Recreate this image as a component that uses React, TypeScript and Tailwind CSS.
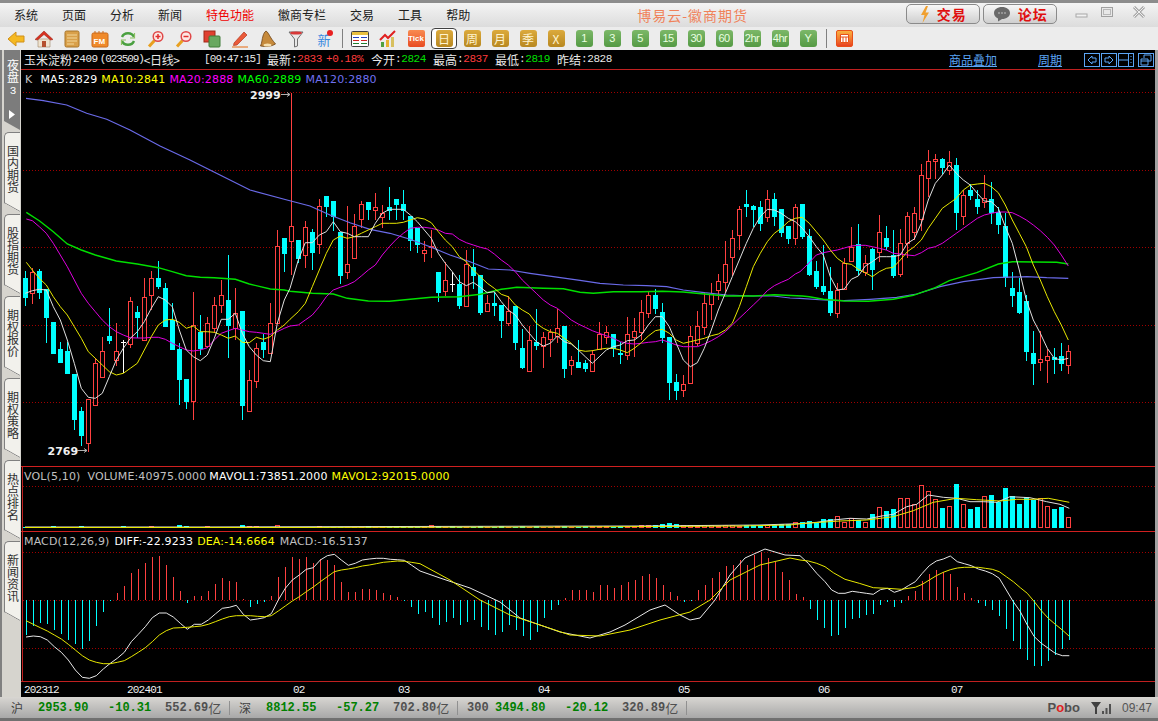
import type { ReactNode } from "react";

type Point = [number, number];
type Candle = [string, number, number, number, number];

const UP = "#ff4040";
const DOWN = "#00ffff";

// candle readings: kind, wick top, body top, body bottom, wick bottom (3x crop units)
const seg1: Candle[] = [
  ["c", 213, 234, 294, 318], ["r", 205, 215, 277, 312], ["c", 207, 213, 279, 297], ["c", 268, 268, 354, 430],
  ["c", 366, 366, 462, 462], ["c", 426, 447, 489, 489], ["c", 426, 453, 522, 522], ["c", 522, 522, 660, 690],
  ["c", 621, 633, 708, 738], ["r", 597, 597, 728, 755], ["r", 475, 490, 617, 617], ["r", 412, 454, 533, 535],
  ["c", 324, 408, 424, 432], ["r", 370, 454, 480, 500], ["w", 420, 426, 426, 518], ["r", 292, 304, 432, 445],
  ["c", 318, 336, 354, 415], ["r", 235, 292, 422, 423], ["r", 213, 235, 287, 330], ["c", 183, 235, 261, 267],
  ["c", 250, 264, 382, 382], ["c", 310, 360, 450, 450], ["c", 430, 447, 540, 615], ["c", 537, 537, 606, 627],
  ["r", 276, 376, 605, 660], ["c", 345, 396, 447, 465], ["r", 351, 370, 440, 445], ["r", 292, 316, 386, 400],
  ["r", 240, 286, 316, 340], ["c", 165, 300, 378, 474], ["r", 264, 340, 386, 420], ["c", 333, 333, 618, 660],
  ["r", 510, 541, 635, 636], ["r", 430, 444, 542, 565], ["c", 402, 426, 450, 474], ["r", 309, 370, 460, 462],
  ["r", 90, 139, 371, 372], ["c", 114, 114, 162, 216], ["r", -321, 79, 124, 225], ["c", 120, 120, 178, 190],
  ["r", 63, 82, 166, 204],
];
const seg2: Candle[] = [
  ["c", 178, 186, 249, 300], ["r", 87, 109, 224, 252], ["c", 78, 78, 111, 141], ["c", 93, 93, 141, 183],
  ["c", 186, 186, 318, 342], ["r", 108, 282, 305, 327], ["r", 132, 168, 264, 264], ["r", 93, 102, 147, 175],
  ["c", 96, 96, 120, 150], ["r", 69, 111, 119, 150], ["r", 105, 129, 140, 174], ["c", 51, 111, 123, 150],
  ["c", 87, 87, 105, 150], ["c", 60, 102, 123, 150], ["c", 138, 138, 213, 243], ["c", 174, 174, 225, 249],
  ["r", 213, 240, 250, 276], ["r", 180, 229, 233, 264], ["c", 306, 306, 369, 396], ["r", 276, 331, 365, 378],
  ["w", 306, 342, 342, 366], ["c", 315, 342, 408, 417], ["r", 240, 282, 408, 408], ["c", 237, 291, 318, 357],
  ["c", 315, 315, 429, 435], ["r", 375, 400, 425, 426], ["c", 366, 399, 408, 438], ["c", 405, 405, 453, 504],
  ["r", 378, 424, 461, 468], ["c", 408, 408, 519, 540], ["c", 477, 534, 594, 597], ["r", 468, 511, 605, 606],
  ["c", 417, 516, 528, 540], ["r", 486, 502, 528, 594], ["r", 477, 487, 509, 561], ["r", 417, 475, 498, 519],
  ["c", 468, 468, 597, 624], ["r", 558, 571, 587, 615], ["c", 510, 576, 594, 594],
  ["c", 570, 579, 597, 606], ["r", 540, 552, 602, 602], ["r", 456, 492, 537, 540], ["r", 468, 487, 501, 522],
  ["c", 492, 492, 537, 560], ["c", 515, 549, 555, 582], ["r", 441, 492, 554, 570], ["r", 444, 483, 502, 561],
  ["r", 390, 427, 486, 510], ["r", 363, 376, 429, 444], ["c", 357, 376, 417, 432], ["c", 399, 426, 504, 519],
  ["c", 501, 501, 639, 690], ["c", 612, 636, 663, 690], ["r", 615, 643, 662, 681], ["r", 468, 498, 638, 639],
  ["r", 423, 468, 519, 528], ["r", 366, 399, 471, 495], ["r", 339, 372, 402, 450], ["r", 312, 333, 360, 390],
  ["r", 213, 282, 335, 366], ["r", 180, 205, 263, 318], ["r", 108, 118, 197, 240], ["c", 60, 102, 111, 141],
  ["c", 105, 108, 120, 171], ["c", 93, 111, 162, 183], ["r", 60, 88, 141, 156], ["c", 69, 87, 141, 168],
  ["c", 117, 117, 189, 201], ["c", 168, 168, 207, 222], ["r", 102, 112, 205, 225], ["c", 102, 102, 201, 207],
  ["c", 177, 198, 315, 318], ["c", 273, 303, 351, 357], ["c", 225, 348, 366, 375], ["c", 291, 363, 429, 438],
  ["r", 340, 360, 429, 444], ["r", 264, 279, 357, 360], ["r", 171, 231, 272, 273], ["c", 162, 222, 304, 315],
  ["r", 255, 280, 306, 318],
];
const seg3: Candle[] = [
  ["c", 325, 327, 390, 450], ["r", 225, 277, 338, 365], ["c", 258, 294, 321, 330], ["c", 270, 346, 408, 415],
  ["r", 267, 310, 404, 410], ["r", 215, 229, 310, 352], ["r", 200, 220, 278, 300], ["r", 72, 106, 238, 272],
  ["r", 30, 64, 115, 171], ["r", 42, 58, 64, 117], ["c", 54, 58, 84, 102], ["r", 33, 67, 91, 105],
  ["c", 54, 75, 218, 270], ["r", 150, 166, 230, 255], ["c", 132, 150, 167, 180], ["c", 150, 177, 201, 222],
  ["r", 105, 175, 187, 204], ["c", 126, 177, 219, 252], ["c", 201, 216, 255, 282], ["c", 220, 258, 414, 441],
  ["c", 396, 444, 468, 501], ["c", 414, 456, 519, 522], ["c", 465, 483, 636, 663], ["c", 573, 639, 672, 735],
  ["r", 573, 658, 667, 693], ["r", 627, 649, 661, 729], ["c", 624, 652, 660, 702], ["c", 609, 648, 672, 693],
  ["r", 615, 634, 676, 702],
];

const toY = (seg: Candle[], oy: number): Candle[] =>
  seg.map(([k, a, b, c, d]) => [k, oy + a / 3, oy + b / 3, oy + c / 3, oy + d / 3]);

const candles: Candle[] = [...toY(seg1, 200), ...toY(seg2, 170), ...toY(seg3, 140)];
const cx = (i: number) => 25 + i * 7;

const scale = (ox: number, oy: number, list: number[]): Point[] => {
  const out: Point[] = [];
  for (let i = 0; i < list.length; i += 2) out.push([ox + list[i] / 3, oy + list[i + 1] / 3]);
  return out;
};

const merge = (...segs: Point[][]) => {
  const out: Point[] = [];
  segs.forEach((s) =>
    s.forEach((p) => {
      if (!out.length || p[0] > out[out.length - 1][0] + 1.5) out.push(p);
    })
  );
  return out.map((p) => `${p[0].toFixed(1)},${p[1].toFixed(1)}`).join(" ");
};

const ma5 = merge(
  scale(20, 200, [16,280,37,272,58,268,79,270,100,320,121,360,142,420,163,490,184,565,205,592,226,595,247,580,268,530,289,480,310,445,331,415,352,395,373,365,394,325,415,290,436,300,457,320,478,390,499,450,520,470,541,482,562,465,583,415,604,358,625,358,646,340,667,400,688,440,709,465,730,482,751,485,772,370,793,300]),
  scale(290, 170, [0,355,25,270,46,218,67,218,88,195,109,185,130,155,151,185,172,190,193,200,214,200,235,200,256,160,277,130,298,118,319,118,340,118,361,135,382,155,403,180,424,205,445,250,466,280,487,305,508,335,529,347,550,337,571,352,592,368,613,365,634,395,655,420,676,435,697,465,718,490,739,515,760,528,781,520,802,498,823,515,844,522,865,540]),
  scale(580, 170, [16,560,37,580,58,560,79,540,100,530,121,525,142,512,163,510,184,495,205,465,226,440,247,440,268,470,289,520,310,570,331,590,352,578,373,535,394,480,415,420,436,370,457,320,478,270,499,220,520,175,541,140,562,118,583,120,604,130,625,145,646,155,667,175]),
  scale(800, 140, [7,250,28,290,49,320,70,345,91,410,112,450,133,447,154,418,175,408,196,378,217,365,238,350,259,350,280,350,301,345,322,310,343,297,364,250,385,180,406,130,427,105,448,75,469,100,490,120,511,135,532,160,553,183,574,185,595,205,616,260,637,310,658,390,679,480,700,540,721,580,742,625,763,655,784,660,805,655])
);
const ma10 = merge(
  scale(20, 200, [19,187,37,210,58,235,79,255,100,290,121,320,142,345,163,380,184,415,205,455,226,475,247,495,268,515,289,525,310,520,331,505,352,490,373,450,394,410,415,375,436,360,457,358,478,367,499,385,520,378,541,395,562,395,583,397,604,405,625,415,646,408,667,427,688,428,709,412,730,418,751,410,772,390,793,375]),
  scale(290, 170, [0,448,25,425,46,400,67,350,88,300,109,250,130,210,151,198,172,205,193,200,214,190,235,180,256,170,277,160,298,160,319,160,340,157,361,150,382,143,403,147,424,158,445,185,466,210,487,230,508,260,529,275,550,300,571,320,592,340,613,355,634,373,655,380,676,405,697,420,718,432,739,460,760,475,781,485,802,490,823,505,844,520,865,540]),
  scale(580, 170, [16,544,37,542,58,538,79,535,100,535,121,540,142,548,163,535,184,518,205,498,226,482,247,478,268,490,289,510,310,520,331,515,352,510,373,505,394,497,415,492,436,480,457,460,478,410,499,350,520,290,541,250,562,215,583,190,604,175,625,155,646,145,667,142]),
  scale(800, 140, [7,232,28,250,49,275,70,300,91,330,112,355,133,370,154,373,175,388,196,398,217,410,238,395,259,385,280,382,301,360,322,335,343,320,364,300,385,265,406,235,427,205,448,190,469,175,490,150,511,135,532,132,553,130,574,140,595,158,616,195,637,240,658,280,679,320,700,375,721,420,742,470,763,515,784,555,805,600])
);
const ma20 = merge(
  scale(20, 200, [19,57,37,62,58,80,79,100,100,130,121,165,142,200,163,240,184,280,205,310,226,335,247,360,268,380,289,395,310,405,331,413,352,414,373,414,394,412,415,412,436,418,457,430,478,440,499,450,520,453,541,450,562,443,583,420,604,400,625,392,646,385,667,390,688,395,709,397,730,400,751,403,772,395,793,385]),
  scale(290, 170, [0,468,25,465,46,450,67,435,88,410,109,380,130,360,151,352,172,345,193,335,214,318,235,300,256,285,277,255,298,230,319,208,340,190,361,175,382,172,403,172,424,175,445,180,466,190,487,192,508,208,529,218,550,225,571,232,592,237,613,252,634,270,655,285,676,305,697,330,718,350,739,370,760,390,781,405,802,415,823,432,844,450,865,462]),
  scale(580, 170, [16,472,37,482,58,490,79,497,100,505,121,515,142,520,163,522,184,520,205,517,226,515,247,510,268,517,289,525,310,530,331,530,352,530,373,522,394,512,415,500,436,485,457,465,478,445,499,425,520,405,541,385,562,362,583,347,604,337,625,328,646,312]),
  scale(800, 140, [0,395,21,375,49,345,70,338,91,334,112,330,133,324,154,318,175,316,196,316,217,320,238,325,259,330,280,340,301,342,322,345,343,347,364,338,385,325,406,320,427,310,448,295,469,280,490,265,511,250,532,235,553,225,574,220,595,216,616,216,637,218,658,228,679,240,700,255,721,272,742,292,763,315,784,345,805,378])
);
const ma60 = merge(
  scale(20, 200, [19,37,58,62,100,95,142,132,184,150,226,165,289,183,352,192,415,203,457,215,499,227,541,232,583,233,646,238,688,252,751,267,793,270]),
  scale(290, 170, [0,364,67,370,130,372,172,385,235,393,298,394,361,388,424,382,508,380,571,373,634,358,680,352,760,355,820,356,870,367]),
  scale(580, 170, [40,370,100,365,184,365,247,364,310,366,373,372,436,378,520,378,583,374,667,378]),
  scale(800, 140, [0,466,28,470,70,478,133,483,205,484,280,478,340,466,406,443,448,422,530,398,595,372,637,365,700,366,770,367,805,372])
);
const ma120 = merge(
  scale(0, 50, [78,145,130,152,200,165,260,190,320,208,390,240,480,288,570,330,660,375,750,420,861,450]),
  scale(290, 170, [60,108,120,135,180,158,240,178,300,190,360,208,420,230,480,255,540,275,595,297,660,300,720,310,790,320,870,331]),
  scale(580, 170, [60,340,130,345,200,347,260,350,310,360,373,368,440,375,520,378,580,378,630,384]),
  scale(800, 140, [0,475,70,480,133,482,210,478,290,472,350,462,420,440,490,425,580,413,680,410,740,413,805,415])
);

// volume bars, height in px
const volSmall = [
  1,1,1,1,2,1,1,1,2,1,1,1,1,1,2,1,1,1,2,1,1,1,3,2,1,1,2,1,1,1,1,3,2,2,1,1,3,1,1,1,
  1,1,2,1,1,1,1,1,1,2,1,1,1,2,1,2,1,1,3,2,1,2,1,1,1,2,1,1,2,1,1,2,1,2,1,1,2,2,1,1,
  2,2,2,2,1,2,2,2,3,3,3,4,5,4,3,3,2,3,3,2,3,3,2,3,3,3,3,3,4,4,6,
];
const volTops = [172,168,175,162,162,154,170,160,166,172,147,127,138,132,100,100,118,61,79,103,129,124,57,118,132,126,94,90,112,69,94,117,97,106,100,124,132,126,157];
const volBars = [...volSmall.slice(0, 111).map((h) => 528 - h), ...volTops.map((v) => 465 + v / 3)];

const vol1 = merge(
  [[25,527],[200,527],[400,526.5],[640,526],[700,525.5],[760,525]],
  scale(800, 465, [0,176,50,172,100,165,150,160,200,162,250,152,280,148,320,125,350,118,385,90,430,97,470,100,510,110,550,110,590,112,630,95,690,98,740,110,780,118,808,130])
);
const vol2 = merge(
  [[25,527.5],[300,527.5],[560,527],[660,526.5],[740,526],[790,525]],
  scale(800, 465, [0,176,60,172,120,168,200,165,280,155,340,137,400,112,470,100,530,104,600,108,650,103,700,103,745,100,808,112])
);

// MACD bars: y of the free end of every bar
const m1 = [510,483,474,477,495,507,525,537,551,528,483,441,404,384,363,324,312,294,276,273,300,336,378,414,393,393,378,357,339,348,351,403,426,417,411,393,336,306,276,282,276,294,282,285,300,351,381,381,372,372,375,384,390,396,404,426,447];
const m2 = [612,618,625,622,618,625,622,620,627,630,635,632,625,630,636,640,632,618,610,605,598,590,590,590,592,585,585,588,585,582,580,576,574,578,585,592,596,602,600,590,585,578,572,566,565,560,565,555,552,558,562,572,580,594,597];
const m3 = [432,465,489,513,510,489,462,459,450,447,420,411,426,414,393,378,348,327,315,321,327,366,384,399,414,423,435,453,492,528,552,585,603,603,588,570,552,525];
const macdBars = [...m1.map((v) => 465 + v / 3), ...m2, ...m3.map((v) => 465 + v / 3)];

const diff = merge(
  scale(20, 465, [18,516,40,513,61,515,82,525,103,545,124,562,145,585,166,615,187,637,208,640,229,632,250,612,271,595,292,580,313,562,334,530,355,508,376,485,397,458,418,444,439,444,460,456,481,475,502,493,523,478,544,478,565,465,586,447,607,430,628,427,649,421,670,448,691,465,712,462,733,458,754,446,775,405,796,370,817,345,838,330,859,313,880,308,901,285,922,272,943,268,964,285,985,301,1006,295,1027,285,1048,282,1069,280,1090,280,1111,283,1132,284,1153,286,1174,300,1200,318]),
  [[440,578],[470,588],[500,602],[520,618],[540,625],[560,632],[590,638],[610,632],[625,625],[650,610],[665,605],[680,615],[690,620],[700,618],[715,600],[730,575],[745,558],[765,549],[785,555]],
  scale(800, 465, [0,272,25,295,50,325,75,350,95,375,115,385,135,385,157,379,178,382,199,385,220,388,241,374,262,370,283,382,304,375,325,362,346,350,367,325,388,302,409,288,430,282,451,273,472,290,493,296,514,302,535,312,556,318,577,326,598,340,619,375,640,410,661,440,682,480,703,515,724,535,745,550,766,565,787,572,808,572])
);
const dea = merge(
  scale(20, 465, [18,467,40,478,61,488,82,498,103,510,124,522,145,538,166,555,187,572,208,585,229,592,250,596,271,596,292,592,313,587,334,575,355,562,376,548,397,530,418,510,439,497,460,489,481,488,502,487,523,485,544,483,565,478,586,470,607,462,628,455,649,452,670,452,691,452,712,454,733,455,754,452,775,438,796,423,817,408,838,395,859,380,880,366,901,350,922,335,943,320,964,315,985,312,1006,308,1027,303,1048,300,1069,296,1090,292,1111,290,1132,288,1153,289,1174,292,1200,296]),
  [[450,580],[480,600],[510,615],[540,625],[570,635],[600,636],[630,630],[660,620],[690,612],[710,600],[730,580],[760,565],[790,558]],
  scale(800, 465, [0,285,25,288,50,295,75,305,100,323,135,343,178,355,220,368,262,370,304,373,346,367,367,358,388,345,409,332,430,322,451,314,472,309,493,307,535,307,556,310,577,313,598,320,619,335,640,350,661,368,682,385,703,410,724,437,745,460,766,478,787,495,808,514])
);

const Dots = ({ y, from = 23 }: { y: number; from?: number }) => (
  <line x1={from} x2={1155} y1={y + 0.5} y2={y + 0.5} stroke="#a00000" strokeDasharray="1 2" shapeRendering="crispEdges" />
);

const Line = ({ points, color, width = 1 }: { points: string; color: string; width?: number }) => (
  <polyline points={points} fill="none" stroke={color} strokeWidth={width} />
);

const MainChart = () => (
  <svg viewBox="21 70 1134 396" className="block h-full w-full">
    {[92, 170, 247, 325, 402].map((y) => (
      <Dots key={y} y={y} />
    ))}
    <g shapeRendering="crispEdges">
      {candles.map(([k, wt, bt, bb, wb], i) => {
        const x = cx(i);
        const color = k === "r" ? UP : k === "c" ? DOWN : "#ffffff";
        return (
          <g key={i}>
            <rect x={x} y={Math.round(wt)} width={1} height={Math.max(1, Math.round(wb - wt))} fill={color} />
            {k === "c" && <rect x={x - 2} y={Math.round(bt)} width={5} height={Math.max(1, Math.round(bb - bt))} fill={color} />}
            {k === "r" && <rect x={x - 1.5} y={Math.round(bt) + 0.5} width={4} height={Math.max(1, Math.round(bb - bt))} fill="#000" stroke={color} />}
            {k === "w" && <rect x={x - 2} y={Math.round(bt)} width={5} height={1} fill={color} />}
          </g>
        );
      })}
    </g>
    <Line points={ma120} color="#6a6ae8" width={1.2} />
    <Line points={ma60} color="#00e000" width={1.4} />
    <Line points={ma20} color="#e000e0" />
    <Line points={ma10} color="#e8e800" />
    <Line points={ma5} color="#e0e0e0" />
    <text x={250} y={98.5} fill="#f0f0f0" fontSize={11} fontWeight={700} fontFamily="'DejaVu Sans', sans-serif">2999</text>
    <path d="M281 94.5H290M287 92.5L290 94.5L287 96.5" fill="none" stroke="#b0b0b0" />
    <text x={47.5} y={454.5} fill="#f0f0f0" fontSize={11} fontWeight={700} fontFamily="'DejaVu Sans', sans-serif">2769</text>
    <path d="M77 450.5H87M84 448.5L87 450.5L84 452.5" fill="none" stroke="#b0b0b0" />
  </svg>
);

const VolChart = () => (
  <svg viewBox="23 467 1132 64" className="block h-full w-full">
    <Dots y={486} />
    <g shapeRendering="crispEdges">
      {volBars.map((top, i) => {
        const x = cx(i);
        const k = candles[i][0];
        const h = Math.max(1, Math.round(528 - top));
        if (k === "r")
          return h < 3 ? (
            <rect key={i} x={x - 2} y={528 - h} width={5} height={h} fill={UP} />
          ) : (
            <rect key={i} x={x - 1.5} y={528 - h + 0.5} width={4} height={h - 1} fill="#000" stroke={UP} />
          );
        return <rect key={i} x={x - 2} y={528 - h} width={5} height={h} fill={DOWN} />;
      })}
    </g>
    <Line points={vol1} color="#e0e0e0" />
    <Line points={vol2} color="#e8e800" />
  </svg>
);

const MacdChart = () => (
  <svg viewBox="23 532 1132 149" className="block h-full w-full">
    {[552, 600, 648].map((y) => (
      <Dots key={y} y={y} />
    ))}
    <g shapeRendering="crispEdges">
      {macdBars.map((end, i) => {
        const x = cx(i) + 1;
        const e = Math.round(end);
        return e < 600 ? (
          <rect key={i} x={x} y={e} width={1} height={600 - e} fill={UP} />
        ) : (
          <rect key={i} x={x} y={600} width={1} height={Math.max(1, e - 600)} fill={DOWN} />
        );
      })}
    </g>
    <Line points={diff} color="#e8e8e8" />
    <Line points={dea} color="#e8e800" />
  </svg>
);

const axisLabels: [string, number][] = [["202312", 24], ["202401", 127], ["02", 293], ["03", 398], ["04", 538], ["05", 678], ["06", 818], ["07", 951]];

const AxisRow = () => (
  <svg viewBox="21 682 1134 15" className="block h-[15px] w-full">
    {axisLabels.map(([t, x]) => (
      <text key={t} x={x} y={693} fill="#f0f0f0" fontSize={11} letterSpacing={-0.8} fontFamily="'Liberation Mono', monospace">{t}</text>
    ))}
  </svg>
);

const Mono = ({ children, className = "" }: { children: ReactNode; className?: string }) => (
  <span className={`font-['Liberation_Mono',monospace] text-[11px] tracking-[-0.4px] ${className}`}>{children}</span>
);

const Quote = ({ label, value, color, w }: { label: string; value: string; color: string; w: string }) => (
  <span className={`flex shrink-0 items-center whitespace-nowrap ${w}`}>
    <span className="text-[#e8e8e8]">{label}</span>
    <Mono className="text-[#e8e8e8]">:</Mono>
    <Mono className={color}>{value}</Mono>
  </span>
);

const NavBtn = ({ d }: { d: string }) => (
  <svg width="16" height="14" viewBox="0 0 14 12" className="block border border-[#5ba5f5]">
    <path d={d} fill="none" stroke="#5ba5f5" strokeWidth="1" />
  </svg>
);

const InfoRow = () => (
  <div className="flex h-[19px] items-center bg-black pl-[3px] text-[12px] leading-none whitespace-nowrap text-[#e8e8e8]">
    <span className="flex w-[180px] shrink-0 items-center">
      玉米淀粉
      <Mono className="ml-px">2409</Mono>
      <Mono className="ml-[2px] tracking-[-1.1px]">(023509)</Mono>
      <span className="tracking-[-0.4px]">&lt;日线&gt;</span>
    </span>
    <Mono className="w-[63px] shrink-0 tracking-[-0.9px]">[09:47:15]</Mono>
    <Quote label="最新" value="2833" color="text-[#ff3c3c]" w="w-[59px]" />
    <Mono className="w-[45px] shrink-0 text-[#ff3c3c]">+0.18%</Mono>
    <Quote label="今开" value="2824" color="text-[#00e000]" w="w-[62px]" />
    <Quote label="最高" value="2837" color="text-[#ff3c3c]" w="w-[62px]" />
    <Quote label="最低" value="2819" color="text-[#00e000]" w="w-[62px]" />
    <Quote label="昨结" value="2828" color="text-[#e8e8e8]" w="w-[62px]" />
    <div className="ml-auto flex items-center pr-px text-[#5ba5f5]">
      <span className="underline">商品叠加</span>
      <span className="ml-[41px] underline">周期</span>
      <div className="ml-[22px] flex gap-px">
        <NavBtn d="M11 4H7V2L3 6L7 10V8H11Z" />
        <NavBtn d="M3 4H7V2L11 6L7 10V8H3Z" />
        <NavBtn d="M0 6H9M9.5 0V12M12 2V3M12 5V6M12 8V9" />
      </div>
      <div className="ml-1">
        <NavBtn d="M5 4V1H12V7H9M2 5H9V11H2ZM2 7H9" />
      </div>
    </div>
  </div>
);

const Home = () => (
  <svg width="20" height="20" viewBox="0 0 20 20"><path d="M4 10H16V18H4Z" fill="#efe3cf" stroke="#a08868" strokeWidth=".6" /><path d="M8 12H12V18H8Z" fill="#b5502e" /><path d="M10 2L19 10.5L16.5 11L10 5.5L3.5 11L1 10.5Z" fill="#d83020" stroke="#902010" strokeWidth=".5" /></svg>
);
const Back = () => (
  <svg width="18" height="18" viewBox="0 0 18 18"><path d="M1 9L9 2V6H17V12H9V16Z" fill="#f5b921" stroke="#d0901a" /></svg>
);
const Doc = () => (
  <svg width="16" height="18" viewBox="0 0 16 18"><rect x="1" y="1" width="14" height="16" rx="1.5" fill="#d9a04a" stroke="#a87428" /><path d="M3 5H13M3 8H13M3 11H13M3 14H10" stroke="#f2d79a" /></svg>
);
const Fm = () => (
  <svg width="18" height="18" viewBox="0 0 18 18"><rect x="1" y="3" width="16" height="14" rx="1.5" fill="#f08a2a" stroke="#c86818" /><path d="M4 1V3M8 1V3M12 1V3" stroke="#c86818" /><text x="2.5" y="14" fontSize="8" fontWeight="700" fill="#fff" fontFamily="'Liberation Sans', sans-serif">FM</text></svg>
);
const Refresh = () => (
  <svg width="18" height="16" viewBox="0 0 18 16"><path d="M3 6C5 1 13 1 15 6M15 10C13 15 5 15 3 10" fill="none" stroke="#4aa040" strokeWidth="2.4" /><path d="M15.5 2V7H11M2.5 14V9H7" fill="none" stroke="#8cc060" strokeWidth="1.2" /></svg>
);
const Zoom = ({ plus }: { plus?: boolean }) => (
  <svg width="18" height="18" viewBox="0 0 18 18">
    <path d="M7.5 10.5L2 16.5" stroke="#e8a020" strokeWidth="3" />
    <circle cx="11" cy="6.5" r="4.8" fill="#fde8e4" stroke="#e04848" strokeWidth="1.5" />
    <path d={plus ? "M8.5 6.5H13.5M11 4V9" : "M8.5 6.5H13.5"} stroke="#e03030" strokeWidth="1.5" />
  </svg>
);
const Windows = () => (
  <svg width="18" height="18" viewBox="0 0 18 18"><rect x="1" y="1" width="11" height="11" fill="#e04030" stroke="#a02818" /><rect x="6" y="6" width="11" height="11" rx="1" fill="#68a860" stroke="#3e7c38" /></svg>
);
const Pen = () => (
  <svg width="18" height="18" viewBox="0 0 18 18"><path d="M3 13L13 2L16 5L6 15L2.5 15.5Z" fill="#ea5a3a" stroke="#b03820" strokeWidth=".7" /><path d="M1 17H17" stroke="#e89050" strokeWidth="1.4" /></svg>
);
const Bell = () => (
  <svg width="18" height="18" viewBox="0 0 18 18"><path d="M7 1C9 2 10 5 12 8C13.5 10.5 15.5 12.5 16.5 14C13 16.5 6 17 1.5 16C3 13 3 9 4 6C4.5 4 5.5 2 7 1Z" fill="#c68a3c" stroke="#6e4214" strokeWidth=".8" /><ellipse cx="8.5" cy="15" rx="4" ry="1.6" fill="#f5e0b0" /></svg>
);
const Funnel = () => (
  <svg width="16" height="18" viewBox="0 0 16 18"><path d="M1 2H15L9.5 9V16L6.5 17V9Z" fill="#e8e8e8" stroke="#707070" /><ellipse cx="8" cy="3" rx="6" ry="1.6" fill="#d83838" /></svg>
);
const Xin = () => (
  <span className="relative block h-[18px] w-[18px] pt-[2px] text-center text-[13px] leading-[16px] text-[#3a8ae0]">
    新
    <span className="absolute right-0 top-0 h-[6px] w-[6px] rounded-full bg-[#e82020]" />
  </span>
);
const TableIcon = () => (
  <svg width="18" height="18" viewBox="0 0 18 18"><rect x=".5" y="1.5" width="17" height="15" rx="1" fill="#fff" stroke="#404040" /><rect x="1" y="2" width="16" height="3" fill="#e8c040" /><path d="M2 7.5H8M10 7.5H16" stroke="#2040c0" /><path d="M2 10.5H8M10 10.5H16" stroke="#d02020" /><path d="M2 13.5H8M10 13.5H16" stroke="#208030" /></svg>
);
const ChartIcon = () => (
  <svg width="18" height="18" viewBox="0 0 18 18"><rect x="2" y="12" width="3" height="5" fill="#50a040" /><rect x="7" y="10" width="3" height="7" fill="#e8b030" /><rect x="12" y="7" width="3" height="10" fill="#d8c060" /><path d="M1 10L6 5L9 8L16 1" fill="none" stroke="#e02020" strokeWidth="2" /></svg>
);
const Tick = () => (
  <span className="block h-[17px] w-[17px] rounded-[2px] bg-linear-to-b from-[#f88a50] to-[#e84a20] text-center font-['Liberation_Sans',sans-serif] text-[8px] leading-[17px] font-bold text-white">Tick</span>
);
const Frame = () => (
  <span className="block h-[17px] w-[17px] rounded-[2px] border border-[#e85018] bg-linear-to-b from-[#f8b040] to-[#e84020] p-[3px]">
    <svg width="9" height="9" viewBox="0 0 9 9" className="block"><path d="M.5.5H8.5V8.5H.5ZM.5 3H8.5M3 3V8.5M6 3V8.5" fill="#fff" stroke="#e85018" /></svg>
  </span>
);

const Gold = ({ t }: { t: string }) => (
  <span className="block h-[17px] w-[17px] rounded-[3px] bg-linear-to-b from-[#dcaa3c] to-[#b88820] text-center text-[12px] leading-[17px] text-[#fff4d0]">{t}</span>
);
const Green = ({ t }: { t: string }) => (
  <span className="block h-[17px] w-[17px] rounded-[3px] bg-linear-to-b from-[#7cb868] to-[#549a44] text-center font-['Liberation_Sans',sans-serif] text-[11px] leading-[17px] tracking-[-0.5px] whitespace-nowrap text-[#eaffe0]">{t}</span>
);

const Slot = ({ children }: { children: ReactNode }) => (
  <div className="flex h-full w-[28px] items-center justify-center">{children}</div>
);
const Sep = () => (
  <div className="flex h-full w-[8px] items-center justify-center">
    <div className="h-[19px] w-px bg-[#808080]" />
  </div>
);

const Toolbar = () => (
  <div className="flex h-[23px] items-center bg-[#ececec] pl-[2px]">
    <Slot><Back /></Slot>
    <Slot><Home /></Slot>
    <Slot><Doc /></Slot>
    <Slot><Fm /></Slot>
    <Slot><Refresh /></Slot>
    <Slot><Zoom plus /></Slot>
    <Slot><Zoom /></Slot>
    <Slot><Windows /></Slot>
    <Slot><Pen /></Slot>
    <Slot><Bell /></Slot>
    <Slot><Funnel /></Slot>
    <Slot><Xin /></Slot>
    <Sep />
    <Slot><TableIcon /></Slot>
    <Slot><ChartIcon /></Slot>
    <Slot><Tick /></Slot>
    <Slot>
      <div className="flex h-[21px] w-[26px] items-center justify-center rounded-[4px] border border-[#404040] bg-white">
        <Gold t="日" />
      </div>
    </Slot>
    {["周", "月", "季", "X"].map((t) => (
      <Slot key={t}><Gold t={t} /></Slot>
    ))}
    {["1", "3", "5", "15", "30", "60", "2hr", "4hr", "Y"].map((t) => (
      <Slot key={t}><Green t={t} /></Slot>
    ))}
    <Sep />
    <Slot><Frame /></Slot>
  </div>
);

const TopBtn = ({ icon, label }: { icon: ReactNode; label: string }) => (
  <div className="flex h-[20px] w-[74px] shrink-0 items-center justify-center gap-[7px] rounded-[5px] border border-[#8a8a8a] bg-linear-to-b from-[#f8f8f8] to-[#cfcfcf] text-[14px] font-bold text-[#e01010]">
    {icon}
    <span className="tracking-[1px]">{label}</span>
  </div>
);

const MenuBar = () => (
  <div className="flex h-[27px] items-center border-t-[3px] border-[#8c8c8c] bg-linear-to-b from-[#f4f4f4] to-[#dcdcdc] pl-[14px] text-[12px] whitespace-nowrap text-[#202020]">
    <div className="flex shrink-0 gap-[24px]">
      <span>系统</span>
      <span>页面</span>
      <span>分析</span>
      <span>新闻</span>
      <span className="text-[#f00000]">特色功能</span>
      <span>徽商专栏</span>
      <span>交易</span>
      <span>工具</span>
      <span>帮助</span>
    </div>
    <span className="ml-[167px] w-[269px] shrink-0 text-[14px] tracking-[1px] text-[#f0825a]">博易云-徽商期货</span>
    <div className="mb-[2px] flex shrink-0 gap-[3px]">
      <TopBtn
        label="交易"
        icon={<svg width="10" height="17" viewBox="0 0 10 17"><path d="M6 0L1 9H4.5L2.5 17L9 6.5H5.5L8 0Z" fill="#f0a030" /></svg>}
      />
      <TopBtn
        label="论坛"
        icon={<svg width="18" height="16" viewBox="0 0 18 16"><path d="M9 1C13.5 1 17 3.5 17 7S13.5 13 9 13L5 15.5V12.5C2.5 11.5 1 9.5 1 7C1 3.5 4.5 1 9 1Z" fill="#6a6a6a" /><path d="M5.5 7H6.5M8.5 7H9.5M11.5 7H12.5" stroke="#ddd" strokeWidth="1.4" /></svg>}
      />
    </div>
    <div className="mb-[6px] ml-[18px] flex shrink-0 items-center">
      <svg width="14" height="12" viewBox="0 0 14 12"><rect x="1" y="8" width="11" height="3" fill="#f2f2f2" stroke="#a8a8a8" /></svg>
      <svg width="14" height="12" viewBox="0 0 14 12" className="ml-[11px]"><rect x="1.5" y="1.5" width="11" height="9" fill="#e8e8e8" stroke="#a0a0a0" /><rect x="3.5" y="3.5" width="7" height="5" fill="none" stroke="#b8b8b8" /></svg>
      <svg width="14" height="12" viewBox="0 0 14 12" className="ml-[18px]"><path d="M2 1L12 11M12 1L2 11" stroke="#a8a8a8" strokeWidth="3" /><path d="M2 1L12 11M12 1L2 11" stroke="#eee" strokeWidth="1" /></svg>
    </div>
  </div>
);

const Tab = ({ text, h }: { text: string; h: string }) => (
  <div className={`relative ml-[2px] ${h} w-[16px] rounded-tl-[5px] border-t border-l border-[#808080] bg-[#f2f1ec] pt-[12px] pl-[2px] [clip-path:polygon(0_0,100%_0,100%_100%,0_calc(100%-9px))]`}>
    <div className="w-[12px] text-[12px] leading-[12px] break-all text-[#303030]">{text}</div>
    <svg width="16" height="10" viewBox="0 0 16 10" className="absolute bottom-0 left-[-1px]">
      <path d="M0 0.5L16 9.5" stroke="#808080" />
    </svg>
  </div>
);

const SideTabs = () => (
  <div className="flex w-[21px] flex-col gap-[2px] border-l-[2px] border-[#808080] bg-[#d6d4ce]">
    <div className="relative ml-[2px] h-[80px] w-[16px] bg-[#7c7c7c] pt-[9px] pl-[3px] text-white [clip-path:polygon(0_0,100%_0,100%_100%,0_calc(100%-9px))]">
      <div className="w-[12px] text-[12px] leading-[12px] break-all">夜盘</div>
      <div className="mt-[2px] w-[12px] text-center font-['Liberation_Mono',monospace] text-[11px] leading-[12px]">3</div>
      <svg width="6" height="9" viewBox="0 0 6 9" className="absolute top-[60px] left-[5px]"><path d="M0 0L6 4.5L0 9Z" fill="#fff" /></svg>
    </div>
    {[
      ["国内期货", "h-[80px]"],
      ["股指期货", "h-[80px]"],
      ["期权报价", "h-[80px]"],
      ["期权策略", "h-[80px]"],
      ["热点排名", "h-[79px]"],
      ["新闻资讯", "h-[80px]"],
    ].map(([t, h]) => (
      <Tab key={t} text={t} h={h} />
    ))}
  </div>
);

const StatGroup = ({ a, b, c, w }: { a: string; b: string; c: string; w: string }) => (
  <>
    <span className="w-[70px] font-bold text-[#008000]">{a}</span>
    <span className="w-[57px] font-bold text-[#008000]">{b}</span>
    <span className={`flex ${w} items-center font-bold text-[#505050]`}>
      {c}
      <span className="font-['Noto_Sans_CJK_SC',sans-serif] text-[13px] font-normal">亿</span>
    </span>
    <span className="mr-[9px] ml-[9px] h-[14px] w-px bg-[#909090]" />
  </>
);

const StatusBar = () => (
  <div className="flex h-[24px] items-center border-b-[3px] border-[#707070] bg-linear-to-b from-[#d8d6d2] to-[#a8a8a8] pl-[11px] font-['Liberation_Mono',monospace] text-[12px] whitespace-nowrap">
    <span className="w-[27px] font-['Noto_Sans_CJK_SC',sans-serif] text-[#404040]">沪</span>
    <StatGroup a="2953.90" b="-10.31" c="552.69" w="w-[55px]" />
    <span className="w-[27px] font-['Noto_Sans_CJK_SC',sans-serif] text-[#404040]">深</span>
    <StatGroup a="8812.55" b="-57.27" c="702.80" w="w-[55px]" />
    <span className="w-[28px] font-bold text-[#505050]">300</span>
    <StatGroup a="3494.80" b="-20.12" c="320.89" w="w-[55px]" />
    <div className="ml-auto flex items-center pr-[6px]">
      <span className="font-['Liberation_Sans',sans-serif] text-[13px] font-bold text-[#505050]">
        P<span className="text-[#e02020]">o</span>bo
      </span>
      <svg width="20" height="14" viewBox="0 0 20 14" className="ml-[11px]">
        <path d="M0 1H10L6 6.5V13H4V6.5Z" fill="#404040" />
        <path d="M11 10H13V13H11ZM14.5 7H16.5V13H14.5ZM18 3H20V13H18Z" fill="#505050" />
      </svg>
      <span className="ml-[11px] font-['Liberation_Sans',sans-serif] text-[#555555]">09:47</span>
    </div>
  </div>
);

const Legend = ({ children }: { children: ReactNode }) => (
  <div className="absolute top-[3px] left-[1px] flex font-['DejaVu_Sans',sans-serif] text-[11px] leading-[14px] tracking-[0.15px] whitespace-nowrap">{children}</div>
);

export default function App() {
  return (
    <div className="flex h-[721px] w-[1158px] flex-col overflow-hidden bg-[#c8c8c8] font-['Noto_Sans_CJK_SC',sans-serif]">
      <MenuBar />
      <Toolbar />
      <div className="flex h-[647px]">
        <SideTabs />
        <div className="flex w-[1134px] flex-col bg-black">
          <InfoRow />
          <div className="border-t border-[#c02020]" />
          <div className="relative h-[396px]">
            <MainChart />
            <div className="absolute top-[3px] left-[4px] flex gap-[4px] font-['DejaVu_Sans',sans-serif] text-[11px] leading-[14px] tracking-[0.15px] whitespace-nowrap">
              <span className="mr-[4px] text-[#c8c8c8]">K</span>
              <span className="text-white">MA5:2829</span>
              <span className="text-[#ffff00]">MA10:2841</span>
              <span className="text-[#ff00ff]">MA20:2888</span>
              <span className="text-[#00ff00]">MA60:2889</span>
              <span className="text-[#7070f0]">MA120:2880</span>
            </div>
          </div>
          <div className="border-t border-[#d02020]" />
          <div className="relative ml-px h-[64px] border-l border-[#c02020]">
            <VolChart />
            <Legend>
              <span className="text-[#c0c0c0]">VOL(5,10)</span>
              <span className="ml-[7px] text-[#c0c0c0]">VOLUME:40975.0000</span>
              <span className="ml-[3px] text-white">MAVOL1:73851.2000</span>
              <span className="ml-[4px] text-[#ffff00]">MAVOL2:92015.0000</span>
            </Legend>
          </div>
          <div className="border-t border-[#d02020]" />
          <div className="relative ml-px h-[149px] border-l border-[#c02020]">
            <MacdChart />
            <Legend>
              <span className="text-[#c0c0c0]">MACD(12,26,9)</span>
              <span className="ml-[5px] text-white">DIFF:-22.9233</span>
              <span className="ml-[4px] text-[#ffff00]">DEA:-14.6664</span>
              <span className="ml-[5px] text-[#c0c0c0]">MACD:-16.5137</span>
            </Legend>
          </div>
          <div className="border-t border-[#c02020]" />
          <AxisRow />
        </div>
        <div className="w-[3px] bg-[#a0a0a0]" />
      </div>
      <StatusBar />
    </div>
  );
}
